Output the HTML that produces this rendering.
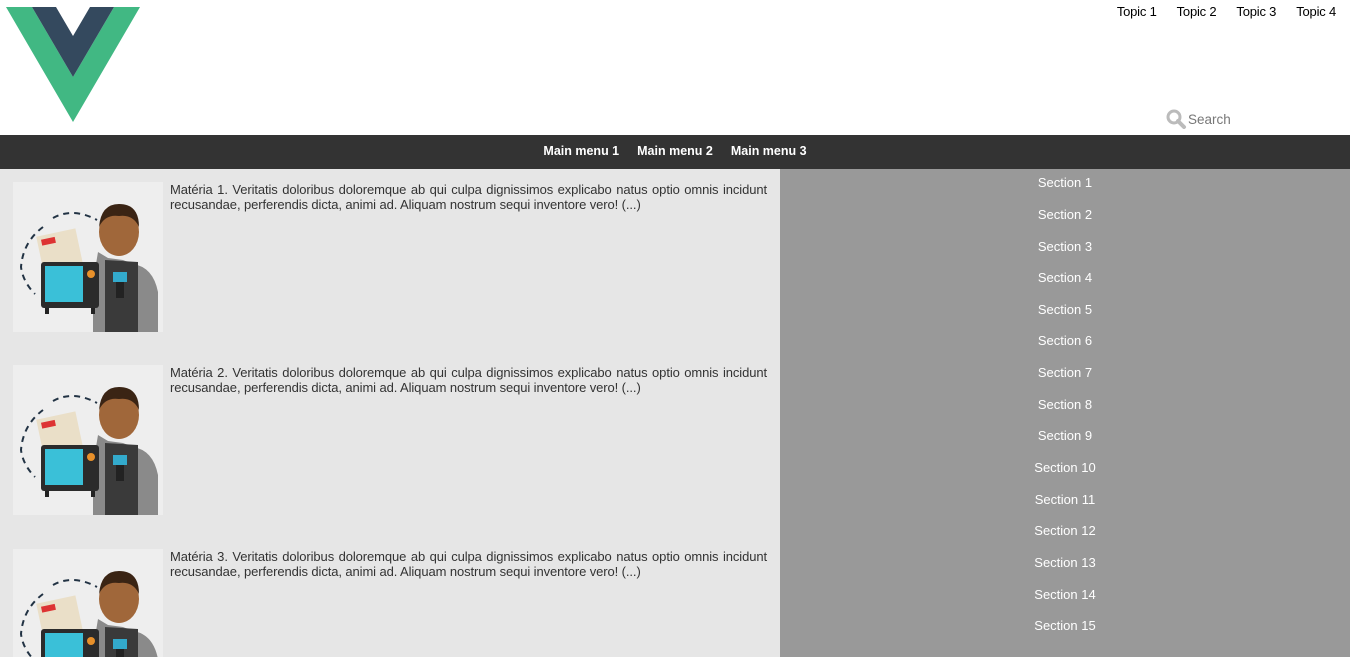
<!DOCTYPE html>
<html><head><meta charset="utf-8"><style>
html,body{margin:0;width:1350px;height:657px;overflow:hidden}
body{font-family:"Liberation Sans",Arial,sans-serif;background:#fff;position:relative}
.topics{position:absolute;top:4px;right:14px;font-size:13px;color:#000}
.topics span{margin-left:20px;letter-spacing:-0.2px}
.search{position:absolute;left:1166px;top:109px;font-size:13.5px;color:#777;display:flex;align-items:center}
.nav{position:absolute;top:135px;left:0;width:1350px;height:34px;background:#333;color:#fff;font-size:12.5px;font-weight:bold;text-align:center;line-height:33px}
.nav span{margin:0 9px}
.main{position:absolute;top:169px;left:0;width:780px;height:488px;background:#e6e6e6;overflow:hidden}
.side{position:absolute;top:169px;left:780px;width:570px;height:488px;background:#999}
.side div{position:absolute;width:570px;text-align:center;color:#fff;font-size:13px}
.art{position:absolute;left:13px;width:754px;height:150px}
.art .img{position:absolute;left:0;top:0;width:150px;height:150px;background:#eee}
.art p{position:absolute;left:157px;top:0;margin:0;width:597px;font-size:13px;line-height:15px;color:#333;text-align:justify;letter-spacing:-0.1px}
</style></head><body>
<svg style="position:absolute;left:6px;top:7px" width="134" height="115" viewBox="0 0 134 115"><polygon points="0,0 26,0 67,70 108,0 134,0 67,115" fill="#41b883"/><polygon points="26,0 50,0 67,29 84,0 108,0 67,70" fill="#34495e"/></svg>
<div class="topics"><span>Topic 1</span><span>Topic 2</span><span>Topic 3</span><span>Topic 4</span></div>
<div class="search"><svg width="22" height="20" viewBox="0 0 22 20"><circle cx="8" cy="8" r="6" fill="none" stroke="#bbb" stroke-width="3"/><line x1="12" y1="12" x2="18" y2="18" stroke="#bbb" stroke-width="4" stroke-linecap="round"/></svg>Search</div>
<div class="nav"><span>Main menu 1</span><span>Main menu 2</span><span>Main menu 3</span></div>
<svg width="0" height="0" style="position:absolute"><defs><g id="il">
<rect width="150" height="150" fill="#eeeeee"/>
<path d="M30 45 Q10 60 8 85 Q10 100 22 112" fill="none" stroke="#234" stroke-width="2" stroke-dasharray="6 5"/>
<path d="M40 36 Q60 25 84 38" fill="none" stroke="#234" stroke-width="2" stroke-dasharray="6 5"/>
<rect x="28" y="50" width="40" height="50" fill="#eadfc8" transform="rotate(-12 48 75)"/>
<rect x="32" y="54" width="14" height="6" fill="#d33" transform="rotate(-12 48 75)"/>
<path d="M85 70 L80 100 L80 150 L145 150 L145 110 Q140 85 120 82 L110 78 L95 76 Z" fill="#8a8a8a"/>
<path d="M92 78 L92 150 L125 150 L125 80 Z" fill="#3a3a3a"/>
<ellipse cx="106" cy="50" rx="20" ry="24" fill="#a0673a"/>
<path d="M86 45 Q88 22 106 22 Q126 22 126 45 Q120 32 106 34 Q92 32 86 45Z" fill="#3a2414"/>
<rect x="100" y="90" width="14" height="10" fill="#33aacc"/>
<rect x="103" y="100" width="8" height="16" fill="#222"/>
<rect x="28" y="80" width="58" height="46" rx="3" fill="#2b2b2b"/>
<rect x="32" y="84" width="38" height="36" fill="#3ac0d8"/>
<circle cx="78" cy="92" r="4" fill="#e8902a"/>
<rect x="32" y="126" width="4" height="6" fill="#222"/><rect x="78" y="126" width="4" height="6" fill="#222"/>
</g></defs></svg>
<div class="main">
<div class="art" style="top:13px"><svg class="img" viewBox="0 0 150 150"><use href="#il"/></svg><p>Matéria 1. Veritatis doloribus doloremque ab qui culpa dignissimos explicabo natus optio omnis incidunt recusandae, perferendis dicta, animi ad. Aliquam nostrum sequi inventore vero! (...)</p></div>
<div class="art" style="top:196px"><svg class="img" viewBox="0 0 150 150"><use href="#il"/></svg><p>Matéria 2. Veritatis doloribus doloremque ab qui culpa dignissimos explicabo natus optio omnis incidunt recusandae, perferendis dicta, animi ad. Aliquam nostrum sequi inventore vero! (...)</p></div>
<div class="art" style="top:380px"><svg class="img" viewBox="0 0 150 150"><use href="#il"/></svg><p>Matéria 3. Veritatis doloribus doloremque ab qui culpa dignissimos explicabo natus optio omnis incidunt recusandae, perferendis dicta, animi ad. Aliquam nostrum sequi inventore vero! (...)</p></div>
</div>
<div class="side">
<div style="top:6px">Section 1</div><div style="top:38px">Section 2</div><div style="top:70px">Section 3</div><div style="top:101px">Section 4</div><div style="top:133px">Section 5</div><div style="top:164px">Section 6</div><div style="top:196px">Section 7</div><div style="top:228px">Section 8</div><div style="top:259px">Section 9</div><div style="top:291px">Section 10</div><div style="top:323px">Section 11</div><div style="top:354px">Section 12</div><div style="top:386px">Section 13</div><div style="top:418px">Section 14</div><div style="top:449px">Section 15</div>
</div>
</body></html>
